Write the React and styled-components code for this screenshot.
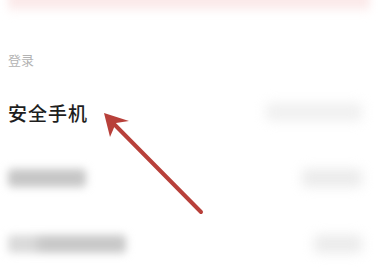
import React from 'react'
import styled, { createGlobalStyle } from 'styled-components'

const GlobalStyle = createGlobalStyle`
    html, body {
        margin: 0;
        padding: 0;
        background: #ffffff;
    }
    body {
        font-family: "Noto Sans CJK SC", "Noto Sans", sans-serif;
    }
`

const rows = [
    { title: '安全手机', valueWidth: 96, valueTone: '#f0f0f0' },
    { titleWidth: 78, valueWidth: 60, valueTone: '#ebebeb' },
    { titleWidth: 118, lead: true, valueWidth: 48, valueTone: '#ebebeb' },
]

const App = () => {
    return (
        <Page>
            <GlobalStyle />
            <Banner />
            <SectionLabel>登录</SectionLabel>

            {rows.map((row, i) => (
                <Row key={i}>
                    {row.title
                        ? <Title>{row.title}</Title>
                        : <Redacted $width={row.titleWidth} $lead={row.lead} />
                    }
                    <Value $width={row.valueWidth} $tone={row.valueTone} />
                </Row>
            ))}

            <Arrow viewBox="0 0 378 273" width="378" height="273">
                <line x1="201" y1="212" x2="111" y2="121" stroke="#b8403a" strokeWidth="4" strokeLinecap="round" />
                <polygon points="104,113 129,121 116,123 110,137" fill="#b8403a" />
            </Arrow>
        </Page>
    )
}

const Page = styled.div`
    position: relative;
    width: 378px;
    height: 273px;
    overflow: hidden;
    background: #ffffff;
`

const Banner = styled.div`
    height: 20px;
    margin: -6px 8px 0;
    background: linear-gradient(to bottom, #fbe4e4 0%, #fcebeb 55%, #ffffff 100%);
    filter: blur(4px);
`

const SectionLabel = styled.div`
    padding: 36px 8px 9px;
    line-height: 20px;
    font-size: 13px;
    color: #b3b3b3;
`

const Row = styled.div`
    height: 66px;
    padding: 0 8px;
    display: flex;
    align-items: center;
    justify-content: space-between;
`

const Title = styled.span`
    font-size: 19px;
    font-weight: 500;
    color: #1e1e1e;
    letter-spacing: 1px;
`

const Redacted = styled.span`
    display: block;
    width: ${p => p.$width}px;
    height: 18px;
    border-radius: 4px;
    background: ${p => p.$lead
        ? 'linear-gradient(to right, #dadada 0 20%, #c8c8c8 30% 100%)'
        : '#c6c6c6'};
    filter: blur(4px);
`

const Value = styled.span`
    display: block;
    width: ${p => p.$width}px;
    height: 18px;
    margin-right: 8px;
    border-radius: 4px;
    background: ${p => p.$tone};
    filter: blur(6px);
`

const Arrow = styled.svg`
    position: absolute;
    left: 0;
    top: 0;
    pointer-events: none;
`

export default App
